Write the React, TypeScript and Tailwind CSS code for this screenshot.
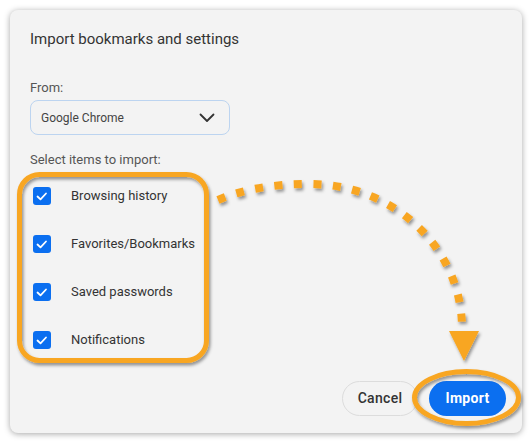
import React from "react";

const items = ["Browsing history", "Favorites/Bookmarks", "Saved passwords", "Notifications"];

function Check() {
  return (
    <div className="w-[18px] h-[18px] rounded-[3px] bg-[#0b6ff0] flex items-center justify-center">
      <svg width="18" height="18" viewBox="0 0 18 18">
        <polyline points="4.5,9.5 7.5,12.3 13,6.5" fill="none" stroke="#ffffff" strokeWidth="1.8" strokeLinecap="round" strokeLinejoin="round" />
      </svg>
    </div>
  );
}

export default function App() {
  return (
    <div className="relative w-[532px] h-[443px] bg-white p-[10px]" style={{ fontFamily: "Roboto, 'Liberation Sans', sans-serif" }}>
      <div className="w-[512px] h-[423px] rounded-[8px] bg-[#f3f3f3] shadow-[0_1px_6px_rgba(0,0,0,0.35)] pl-[20px] pr-[16px] pt-[19px] pb-[17px] flex flex-col">
        <div className="text-[15px] leading-[20px] text-[#333333]">Import bookmarks and settings</div>
        <div className="mt-[31px] text-[13px] leading-[16px] text-[#555555]">From:</div>
        <div className="mt-[4px] w-[200px] h-[35px] rounded-[8px] border-[1.5px] border-[#bcd4f0] flex items-center justify-between pl-[10px] pr-[14px]">
          <span className="text-[12px] text-[#444444]">Google Chrome</span>
          <svg width="16" height="10" viewBox="0 0 16 10">
            <polyline points="1.5,1.5 8,8 14.5,1.5" fill="none" stroke="#333333" strokeWidth="1.8" strokeLinecap="round" strokeLinejoin="round" />
          </svg>
        </div>
        <div className="mt-[17px] text-[13px] leading-[16px] text-[#555555]">Select items to import:</div>
        <div className="mt-[4px] flex flex-col">
          {items.map((t) => (
            <div key={t} className="h-[48px] flex items-center pl-[3px] gap-[20px]">
              <Check />
              <span className="text-[13px] text-[#333333]">{t}</span>
            </div>
          ))}
        </div>
        <div className="flex-1" />
        <div className="flex justify-end items-center gap-[11px]">
          <button className="w-[76px] h-[35px] rounded-full border border-[#dcdcdc] text-[14px] font-medium text-[#333333] tracking-[0.3px]">Cancel</button>
          <button className="w-[77px] h-[35px] rounded-full bg-[#0b6ff0] text-[14px] font-bold text-white tracking-[0.3px]">Import</button>
        </div>
      </div>
      <svg className="absolute inset-0 pointer-events-none" width="532" height="443" viewBox="0 0 532 443">
        <defs>
          <filter id="sh" x="-20%" y="-20%" width="140%" height="140%">
            <feDropShadow dx="1.5" dy="2.5" stdDeviation="1.5" floodColor="#000" floodOpacity="0.4" />
          </filter>
        </defs>
        <g filter="url(#sh)" fill="none" stroke="#f8a623">
          <rect x="19.5" y="174.5" width="187" height="186" rx="20" strokeWidth="5" />
          <path d="M218 200 Q 255 184 310 184 A 152 144 0 0 1 462 328" strokeWidth="8" strokeDasharray="8 11.5" />
          <ellipse cx="466.5" cy="397.5" rx="52" ry="26" strokeWidth="5" />
        </g>
        <polygon points="449,331 479,331 464,361" fill="#f8a623" filter="url(#sh)" />
      </svg>
    </div>
  );
}
